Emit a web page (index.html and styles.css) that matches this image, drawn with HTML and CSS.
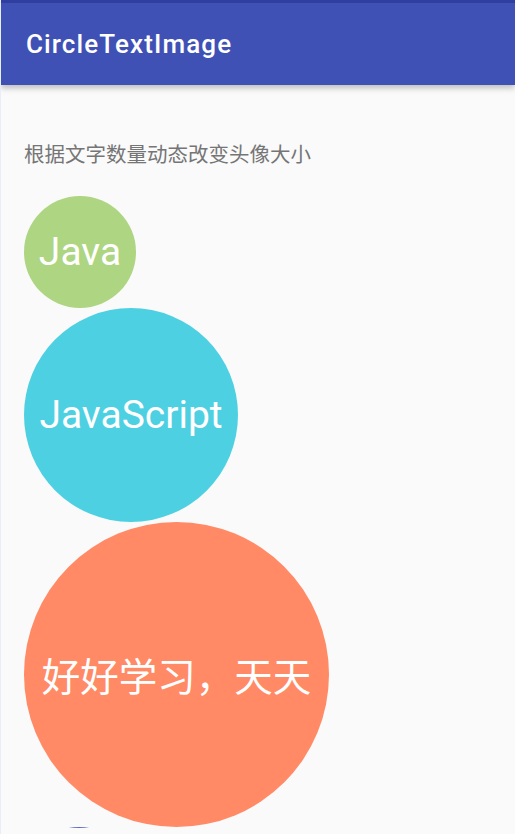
FILE: index.html
```html
<!DOCTYPE html>
<html lang="zh">
<head>
<meta charset="utf-8">
<title>CircleTextImage</title>
<link rel="stylesheet" href="styles.css">
</head>
<body>
<div class="app">
  <header class="appbar">
    <div class="statusbar"></div>
    <div class="toolbar"><span class="title">CircleTextImage</span></div>
  </header>
  <main class="content">
    <p class="subtitle">根据文字数量动态改变头像大小</p>
    <div class="list">
      <div class="circle green">Java</div>
      <div class="circle cyan">JavaScript</div>
      <div class="circle orange">好好学习，天天</div>
      <div class="circle indigo"></div>
    </div>
  </main>
</div>
</body>
</html>
```

FILE: styles.css
```css
html, body {
  margin: 0;
  padding: 0;
  height: 100%;
  overflow: hidden;
}
body {
  background: #fafafa;
  font-family: Roboto, "Noto Sans CJK SC", sans-serif;
}
.app {
  height: 834px;
  overflow: hidden;
  border-left: 1px solid #e8eef8;
  box-sizing: border-box;
}
.appbar {
  position: relative;
  z-index: 2;
  box-shadow: 0 3px 6px rgba(0, 0, 0, 0.25);
}
.statusbar {
  height: 3px;
  background: #303f9f;
}
.toolbar {
  height: 82px;
  background: #3f51b5;
  display: flex;
  align-items: center;
  padding-left: 25px;
}
.title {
  color: #ffffff;
  font-family: Roboto, sans-serif;
  font-weight: 500;
  font-size: 26px;
  letter-spacing: 1.1px;
  line-height: 1;
}
.content {
  padding: 0 0 0 23px;
  height: 743px;
  overflow: hidden;
}
.subtitle {
  margin: 56px 0 0 0;
  font-family: "Noto Sans CJK SC", sans-serif;
  font-size: 20.5px;
  line-height: 24px;
  color: #757575;
}
.list {
  margin-top: 31px;
  display: flex;
  flex-direction: column;
  align-items: flex-start;
}
.circle {
  border-radius: 50%;
  display: flex;
  align-items: center;
  justify-content: center;
  color: #ffffff;
  font-family: Roboto, "Noto Sans CJK SC", sans-serif;
  font-size: 39px;
  line-height: 1;
  white-space: nowrap;
  flex-shrink: 0;
}
.green {
  width: 112px;
  height: 112px;
  background: #aed581;
}
.cyan {
  width: 214px;
  height: 214px;
  background: #4dd0e1;
}
.orange {
  width: 305px;
  height: 305px;
  background: #ff8a65;
  font-family: "Noto Sans CJK SC", sans-serif;
  font-size: 38.5px;
}
.indigo {
  width: 110px;
  height: 110px;
  background: #5c6bc0;
}
```
